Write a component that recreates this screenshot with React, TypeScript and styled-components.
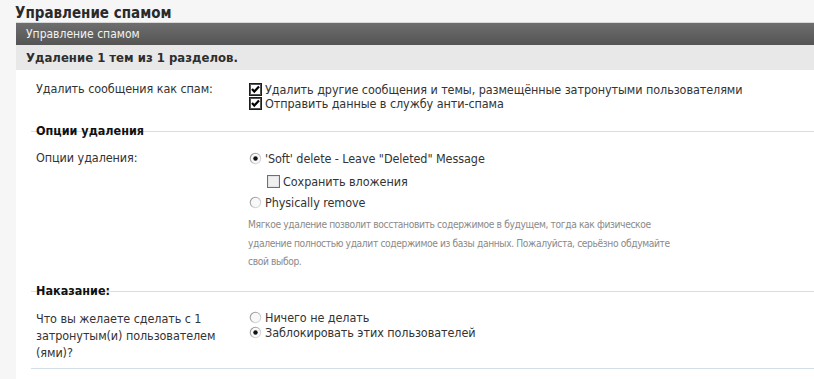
import React from "react";
import styled, { createGlobalStyle } from "styled-components";

const Global = createGlobalStyle`
  html, body { margin: 0; padding: 0; }
  body {
    background: #f6f6f6;
    font-family: Tahoma, "DejaVu Sans Condensed", "Liberation Sans", sans-serif;
    color: #333;
  }
`;

const Page = styled.div`
  padding-top: 4px;
  width: 814px;
  height: 379px;
  overflow: hidden;
`;

const Title = styled.h1`
  margin: 0;
  padding-left: 15px;
  font-size: 15px;
  line-height: 18px;
  font-weight: bold;
  color: #2a2a2a;
`;

const Panel = styled.div`
  margin-left: 16px;
  background: #fff;
  min-height: 400px;
`;

const HeaderBar = styled.div`
  height: 22px;
  border-top: 1px solid #d9d9d9;
  background: linear-gradient(#6e6e6e, #545454);
  color: #f2f2f2;
  font-size: 12px;
  line-height: 22px;
  padding-left: 10px;
`;

const SubHeader = styled.div`
  height: 25px;
  background: #e8e8e8;
  color: #2e2e2e;
  font-size: 13px;
  font-weight: bold;
  line-height: 25px;
  padding-left: 10px;
`;

const Body = styled.div`
  padding: 0 0 0 15px;
`;

const Row = styled.div<{ $top: number; $bottom: number }>`
  display: grid;
  grid-template-columns: 213px 1fr;
  padding: ${(p) => p.$top}px 0 ${(p) => p.$bottom}px 5px;
  font-size: 12.5px;
  letter-spacing: -0.08px;
`;

const Label = styled.div<{ $lh?: number }>`
  line-height: ${(p) => p.$lh ?? 16}px;
  color: #333;
  width: 200px;
`;

const Options = styled.div`
  display: flex;
  flex-direction: column;
`;

const Option = styled.label<{ $h: number; $indent?: number }>`
  display: flex;
  align-items: center;
  gap: 3px;
  height: ${(p) => p.$h}px;
  padding-left: ${(p) => p.$indent ?? 0}px;
  color: #333;
  white-space: nowrap;
`;

const Explain = styled.p`
  margin: 6px 0 0 -1px;
  font-size: 10.2px;
  letter-spacing: -0.38px;
  line-height: 18.5px;
  color: #8a8a8a;
  white-space: nowrap;
`;

const Section = styled.div`
  border-top: 1px solid #d3dfe9;
`;

const Legend = styled.div`
  margin-top: -8px;
  padding-left: 5px;
  height: 14px;
  font-size: 12.5px;
  font-weight: bold;
  line-height: 14px;
  color: #111;
`;

const EndLine = styled.div`
  border-top: 1px solid #d3dfe9;
`;

const BoxSvg = styled.svg`
  flex: 0 0 auto;
  display: block;
`;

function CheckBox({ checked }: { checked: boolean }) {
  return (
    <BoxSvg width="13" height="13" viewBox="0 0 13 13">
      {checked ? (
        <>
          <rect x="0.5" y="0.5" width="12" height="12" fill="#fff" stroke="#1c1c1c" />
          <rect x="1.5" y="1.5" width="10" height="10" fill="#fff" stroke="#555" strokeWidth="1" />
          <path d="M3 6 L5.3 8.6 L10 3.4" fill="none" stroke="#000" strokeWidth="2.2" />
        </>
      ) : (
        <>
          <rect x="0.5" y="0.5" width="12" height="12" fill="#fff" stroke="#6f6f6f" />
          <rect x="1.5" y="1.5" width="10" height="10" fill="#f0f0f0" stroke="#e3e3e3" />
        </>
      )}
    </BoxSvg>
  );
}

function Radio({ checked }: { checked: boolean }) {
  return (
    <BoxSvg width="13" height="13" viewBox="0 0 13 13">
      <defs>
        <linearGradient id="rg" x1="0" y1="0" x2="1" y2="1">
          <stop offset="0" stopColor="#7e7e7e" />
          <stop offset="0.6" stopColor="#c8c8c8" />
          <stop offset="1" stopColor="#ececec" />
        </linearGradient>
      </defs>
      <circle cx="6.5" cy="6.5" r="5.8" fill="url(#rg)" />
      <circle cx="6.5" cy="6.5" r="4.7" fill="#f8f8f8" />
      {checked && <circle cx="6.5" cy="6.5" r="2.2" fill="#111" />}
    </BoxSvg>
  );
}

export default function App() {
  return (
    <Page>
      <Global />
      <Title>Управление спамом</Title>
      <Panel>
        <HeaderBar>Управление спамом</HeaderBar>
        <SubHeader>Удаление 1 тем из 1 разделов.</SubHeader>
        <Body>
          <Row $top={11} $bottom={21}>
            <Label>Удалить сообщения как спам:</Label>
            <Options>
              <Option $h={14} style={{ marginTop: 1 }}>
                <CheckBox checked />
                Удалить другие сообщения и темы, размещённые затронутыми пользователями
              </Option>
              <Option $h={14}>
                <CheckBox checked />
                Отправить данные в службу анти-спама
              </Option>
            </Options>
          </Row>
          <Section>
            <Legend>Опции удаления</Legend>
            <Row $top={12} $bottom={19}>
              <Label>Опции удаления:</Label>
              <Options>
                <Option $h={16}>
                  <Radio checked />
                  'Soft' delete - Leave "Deleted" Message
                </Option>
                <Option $h={16} $indent={18} style={{ marginTop: 7 }}>
                  <CheckBox checked={false} />
                  Сохранить вложения
                </Option>
                <Option $h={16} style={{ marginTop: 5 }}>
                  <Radio checked={false} />
                  Physically remove
                </Option>
                <Explain>
                  Мягкое удаление позволит восстановить содержимое в будущем, тогда как физическое
                  <br />
                  удаление полностью удалит содержимое из базы данных. Пожалуйста, серьёзно обдумайте
                  <br />
                  свой выбор.
                </Explain>
              </Options>
            </Row>
          </Section>
          <Section>
            <Legend>Наказание:</Legend>
            <Row $top={12} $bottom={7}>
              <Label $lh={17}>Что вы желаете сделать с 1 затронутым(и) пользователем (ями)?</Label>
              <Options>
                <Option $h={16}>
                  <Radio checked={false} />
                  Ничего не делать
                </Option>
                <Option $h={14}>
                  <Radio checked />
                  Заблокировать этих пользователей
                </Option>
              </Options>
            </Row>
          </Section>
          <EndLine />
        </Body>
      </Panel>
    </Page>
  );
}
